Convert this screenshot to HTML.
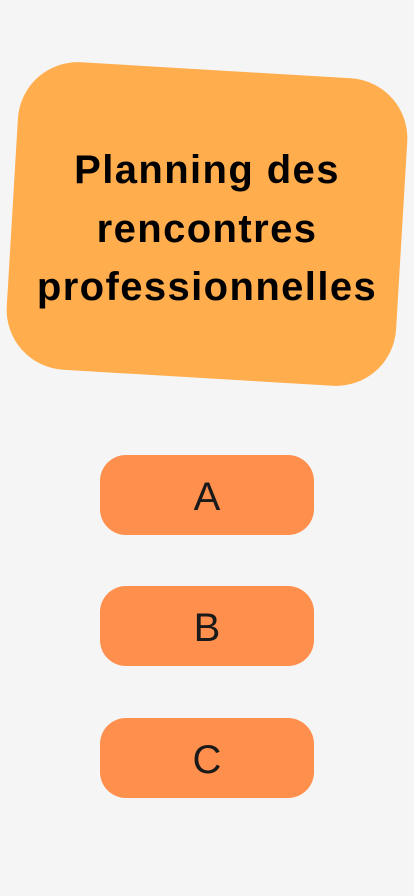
<!DOCTYPE html>
<html><head><meta charset="utf-8"><style>
html,body{margin:0;padding:0;width:414px;height:896px;background:#f5f5f5;overflow:hidden;font-family:"Liberation Sans",sans-serif;}
.card{position:absolute;left:12px;top:70px;width:390px;height:308px;background:#ffad4d;border-radius:60px;transform:rotate(3.4deg);}
.title{position:absolute;left:0;top:141px;width:414px;text-align:center;font-weight:bold;font-size:40px;letter-spacing:1.4px;line-height:58.5px;color:#000;}
.btn{position:absolute;left:100px;width:214px;height:80px;background:#ff8f4d;border-radius:26px;text-align:center;line-height:84px;font-size:40px;color:#1a1a1a;}
</style></head><body>
<div class="card"></div>
<div class="title">Planning des<br>rencontres<br>professionnelles</div>
<div class="btn" style="top:455px">A</div>
<div class="btn" style="top:586px">B</div>
<div class="btn" style="top:718px">C</div>
</body></html>
